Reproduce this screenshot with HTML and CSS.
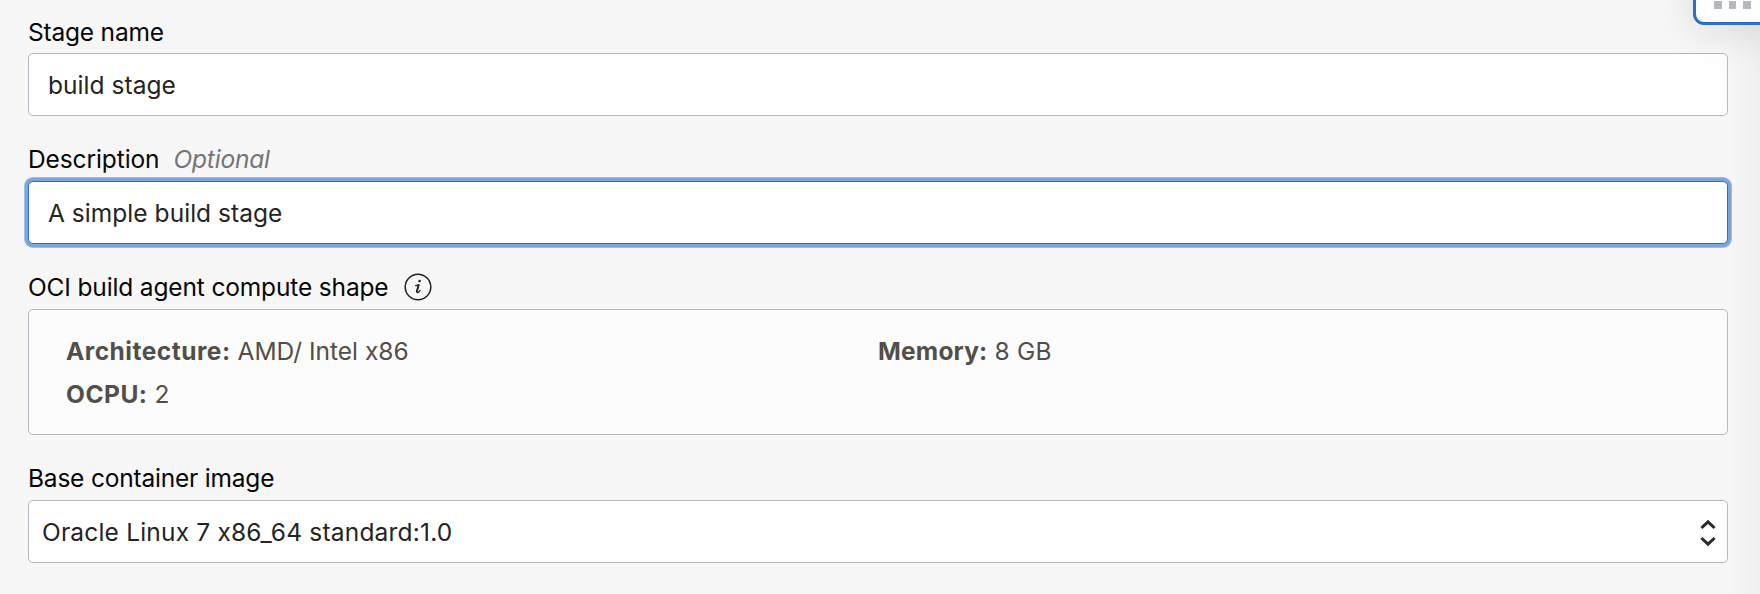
FILE: index.html
```
<!DOCTYPE html>
<html lang="en">
<head>
<meta charset="utf-8">
<title>Build stage</title>
<link rel="stylesheet" href="styles.css">
</head>
<body>
<main class="panel">
  <form class="form">
    <section class="field field-first">
      <label class="label label-name" for="name">Stage name</label>
      <input class="control" id="name" type="text" value="build stage">
    </section>
    <section class="field">
      <label class="label label-desc" for="desc"><span>Description</span><em class="optional">Optional</em></label>
      <input class="control control-focused" id="desc" type="text" value="A simple build stage">
    </section>
    <section class="field">
      <div class="label label-shape">
        <span>OCI build agent compute shape</span>
        <svg class="info" viewBox="0 0 28 28" aria-hidden="true">
          <circle cx="14" cy="14" r="12.8" fill="none" stroke="#222" stroke-width="1.5"/>
          <circle cx="15.6" cy="8" r="1.3" fill="#222"/>
          <path d="M11.6 12.6 L15 11.8 L12.9 18.3 Q12.6 20 13.8 19.6 Q15.2 19 16.2 17.4" fill="none" stroke="#222" stroke-width="1.2" stroke-linecap="round" stroke-linejoin="round"/>
          <path d="M14.5 12.2 L12.8 18.6" stroke="#222" stroke-width="1.8" stroke-linecap="round"/>
        </svg>
      </div>
      <div class="shape">
        <div class="spec"><b class="spec-arch">Architecture:</b> AMD/ Intel x86</div>
        <div class="spec"><b class="spec-memory">Memory:</b> <span class="spec-size">8 GB</span></div>
        <div class="spec"><b class="spec-ocpu">OCPU:</b> 2</div>
      </div>
    </section>
    <section class="field">
      <div class="label label-image">Base container image</div>
      <div class="control select">
        <span>Oracle Linux 7 x86_64 standard:1.0</span>
        <svg class="arrows" viewBox="0 0 16 28" aria-hidden="true">
          <path d="M1.4 9 L8 2.8 L14.6 9 M1.4 19 L8 25.2 L14.6 19" fill="none" stroke="#2b2b2b" stroke-width="3"/>
        </svg>
      </div>
    </section>
  </form>
  <div class="edge"></div>
  <div class="handle"><i class="dot"></i><i class="dot"></i><i class="dot"></i></div>
</main>
</body>
</html>
```

FILE: styles.css
```
* { box-sizing: border-box; }

body {
  margin: 0;
  background: #f7f7f7;
  color: #060606;
  font: 24.5px/32px Inter, "Liberation Sans", sans-serif;
}

.panel {
  position: relative;
  height: 594px;
  overflow: hidden;
}

.form { padding: 0 32px 0 28px; }

.field { padding-top: 27px; }
.field-first { padding-top: 16px; }

.label {
  display: flex;
  align-items: center;
  height: 32px;
  margin-bottom: 6px;
}

.label-name { margin-bottom: 5px; letter-spacing: -0.2px; }
.label-desc { letter-spacing: -0.1px; }
.label-shape { letter-spacing: -0.15px; }
.label-image { letter-spacing: -0.2px; }

.optional {
  margin-left: 14px;
  color: #757575;
  letter-spacing: -0.2px;
}

.info {
  width: 28px;
  height: 28px;
  margin-left: 15px;
}

.control {
  display: block;
  width: 100%;
  height: 63px;
  padding: 0 19px;
  border: 1px solid #b4b7bf;
  border-radius: 5px;
  background: #fff;
  color: #242424;
  font: inherit;
  letter-spacing: 0.04px;
  outline: none;
}

.control-focused {
  border-color: #2e6cc6;
  box-shadow: 0 0 0 3px #7ea4dd, 0 0 0 4px #a0bde7;
}

.select {
  display: flex;
  align-items: center;
  justify-content: space-between;
  padding: 0 11px 0 13px;
  letter-spacing: 0.19px;
}

.arrows { width: 16px; height: 28px; margin-top: 3px; }

.shape {
  display: grid;
  grid-template-columns: 1fr 1fr;
  align-content: start;
  height: 126px;
  padding: 20px 37px;
  border: 1px solid #b4b7bf;
  border-radius: 5px;
  background: #fcfcfc;
  color: #524e49;
  line-height: 43px;
}

.spec-arch { letter-spacing: 0.5px; }
.spec-memory { letter-spacing: 0.2px; }
.spec-ocpu { letter-spacing: 0.5px; }
.spec-size { letter-spacing: 0.3px; }

/* Shadow falling on the form from the neighbouring pane */
.edge {
  position: absolute;
  top: 0;
  right: 0;
  bottom: 0;
  width: 34px;
  background: linear-gradient(to right, rgba(0, 0, 0, 0), rgba(0, 0, 0, 0.03));
}

/* Drag handle overlapping the top right corner */
.handle {
  position: absolute;
  top: -30px;
  right: -30px;
  display: flex;
  align-items: flex-end;
  gap: 7px;
  width: 97px;
  height: 55px;
  padding: 0 0 13px 18px;
  border: 3px solid #2c70c9;
  border-radius: 11px;
  background: #fff;
  box-shadow: 0 4px 44px rgba(0, 0, 0, 0.13);
}

.dot {
  flex: none;
  width: 7.5px;
  height: 8px;
  background: #b3b9bf;
}
```
